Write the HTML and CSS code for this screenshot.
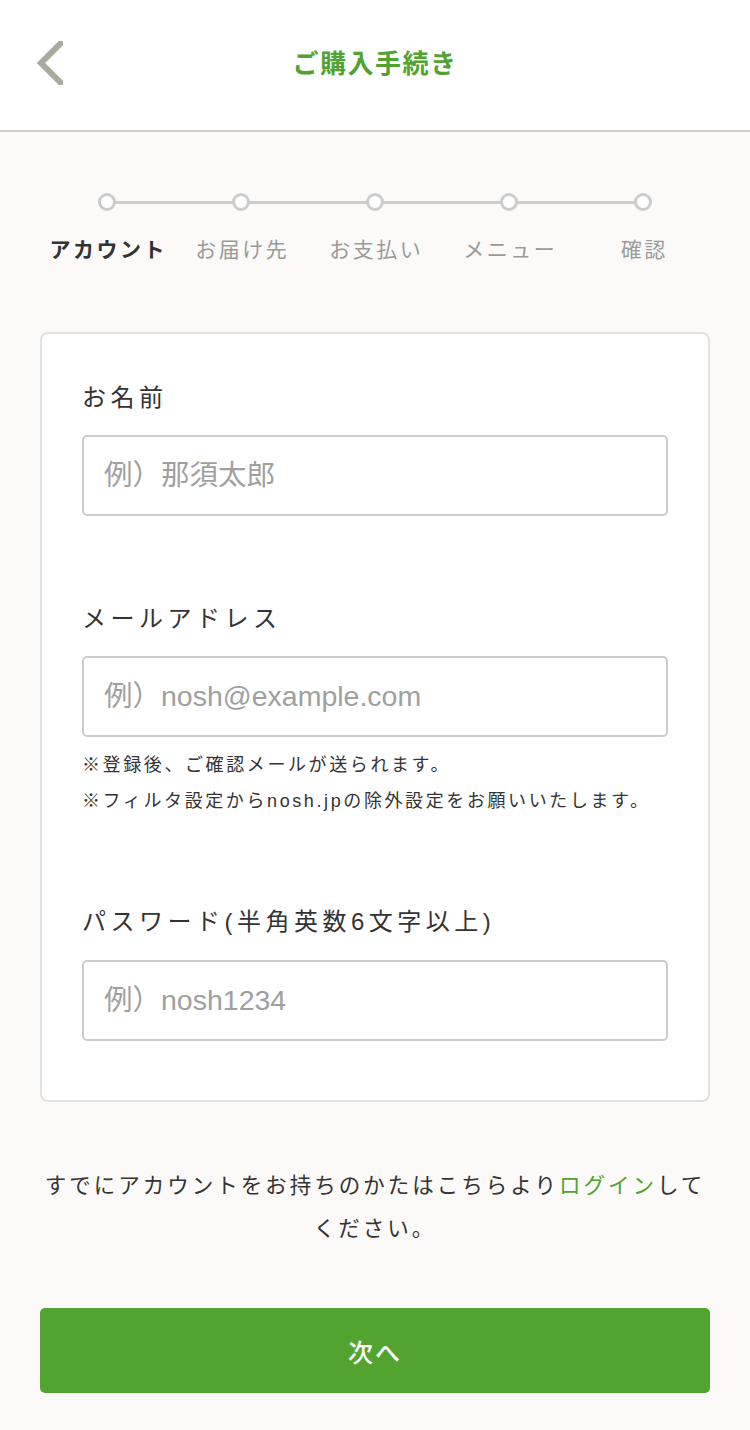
FILE: index.html
```html
<!DOCTYPE html>
<html lang="ja">
<head>
<meta charset="utf-8">
<title>ご購入手続き</title>
<link rel="stylesheet" href="styles.css">
</head>
<body>
<header class="header">
  <a class="back" href="#" aria-label="戻る">
    <svg width="27" height="44" viewBox="0 0 27 44"><polyline points="27,0 5,22 27,44" fill="none" stroke="#a8ab9c" stroke-width="6" stroke-linejoin="miter"/></svg>
  </a>
  <h1 class="title">ご購入手続き</h1>
  <span class="spacer"></span>
</header>

<ol class="steps">
  <li class="step is-active"><span class="dot"></span><span class="step-label">アカウント</span></li>
  <li class="step"><span class="dot"></span><span class="step-label">お届け先</span></li>
  <li class="step"><span class="dot"></span><span class="step-label">お支払い</span></li>
  <li class="step"><span class="dot"></span><span class="step-label">メニュー</span></li>
  <li class="step"><span class="dot"></span><span class="step-label">確認</span></li>
</ol>

<form class="card">
  <div class="field">
    <label class="label">お名前</label>
    <input class="input" type="text" placeholder="例）那須太郎">
  </div>
  <div class="field">
    <label class="label">メールアドレス</label>
    <input class="input" type="email" placeholder="例）nosh@example.com">
    <p class="note">※登録後、ご確認メールが送られます。<br>※フィルタ設定からnosh.jpの除外設定をお願いいたします。</p>
  </div>
  <div class="field field-pw">
    <label class="label">パスワード(半角英数6文字以上)</label>
    <input class="input" type="password" placeholder="例）nosh1234">
  </div>
</form>

<p class="login"><span>すでにアカウントをお持ちのかたはこちらより</span><a href="#">ログイン</a><span>してください。</span></p>

<div class="actions">
  <button class="next" type="button">次へ</button>
</div>
</body>
</html>
```
FILE: styles.css
```css
* { box-sizing: border-box; }
html, body { margin: 0; padding: 0; }
body {
  background: #fbfaf8;
  font-family: "Liberation Sans", "Noto Sans CJK JP", sans-serif;
  color: #333;
  width: 750px;
}

.header {
  height: 132px;
  background: #fff;
  border-bottom: 2px solid #cfcfcf;
  display: grid;
  grid-template-columns: 1fr auto 1fr;
  align-items: center;
  padding-left: 36px;
}
.back { display: flex; align-items: center; height: 44px; margin-top: -4px; }
.back svg { display: block; }
.title {
  margin: 0;
  font-size: 26px;
  font-weight: 700;
  letter-spacing: 1.5px;
  color: #52a232;
  font-family: "Noto Sans CJK JP", sans-serif;
  line-height: 36px;
  margin-left: -36px;
  margin-top: -6px;
}

.steps {
  list-style: none;
  margin: 61px 40px 0;
  padding: 0;
  display: grid;
  grid-template-columns: repeat(5, 1fr);
}
.step {
  position: relative;
  display: flex;
  flex-direction: column;
  align-items: center;
}
.step:not(:last-child)::after {
  content: "";
  position: absolute;
  top: 7.5px;
  left: 50%;
  width: 100%;
  height: 3px;
  background: #cccccc;
}
.dot {
  position: relative;
  z-index: 1;
  width: 18px;
  height: 18px;
  border: 3px solid #cccccc;
  border-radius: 50%;
  background: #fff;
}
.step-label {
  margin-top: 22px;
  line-height: 30px;
  font-size: 21px;
  letter-spacing: 2.5px;
  padding-left: 2.5px;
  color: #9a9a9a;
  font-family: "Noto Sans CJK JP", sans-serif;
  white-space: nowrap;
}
.step.is-active .step-label { color: #333; font-weight: 700; }

.card {
  margin: 69px 40px 0;
  background: #fff;
  border: 2px solid #e2e2e2;
  border-radius: 8px;
  padding: 48px 40px 59px;
}
.field + .field { margin-top: 87px; }
.label {
  display: block;
  font-size: 24px;
  line-height: 32px;
  letter-spacing: 4.5px;
  color: #333;
}
.input {
  display: block;
  width: 100%;
  height: 81px;
  margin-top: 21px;
  border: 2px solid #cccccc;
  border-radius: 5px;
  background: #fff;
  padding: 0 20px;
  font-family: "Liberation Sans", "Noto Sans CJK JP", sans-serif;
  font-size: 28.5px;
  color: #333;
  outline: none;
}
.field-pw .input { margin-top: 22px; }
.input::placeholder { color: #a0a0a0; opacity: 1; }
.note {
  margin: 10px 0 0;
  font-size: 18px;
  line-height: 36px;
  letter-spacing: 2.6px;
  color: #333;
}

.login {
  margin: 60px 40px 0;
  text-align: center;
  font-size: 21.5px;
  line-height: 43px;
  letter-spacing: 3px;
  color: #333;
  font-family: "Noto Sans CJK JP", sans-serif;
}
.login a { color: #52a232; text-decoration: none; }

.actions { padding: 60px 40px 36px; }
.next {
  display: block;
  width: 100%;
  height: 85px;
  border: 0;
  border-radius: 5px;
  background: #53a331;
  color: #fff;
  font-family: "Noto Sans CJK JP", sans-serif;
  font-size: 25px;
  font-weight: 500;
  letter-spacing: 2px;
}
```
